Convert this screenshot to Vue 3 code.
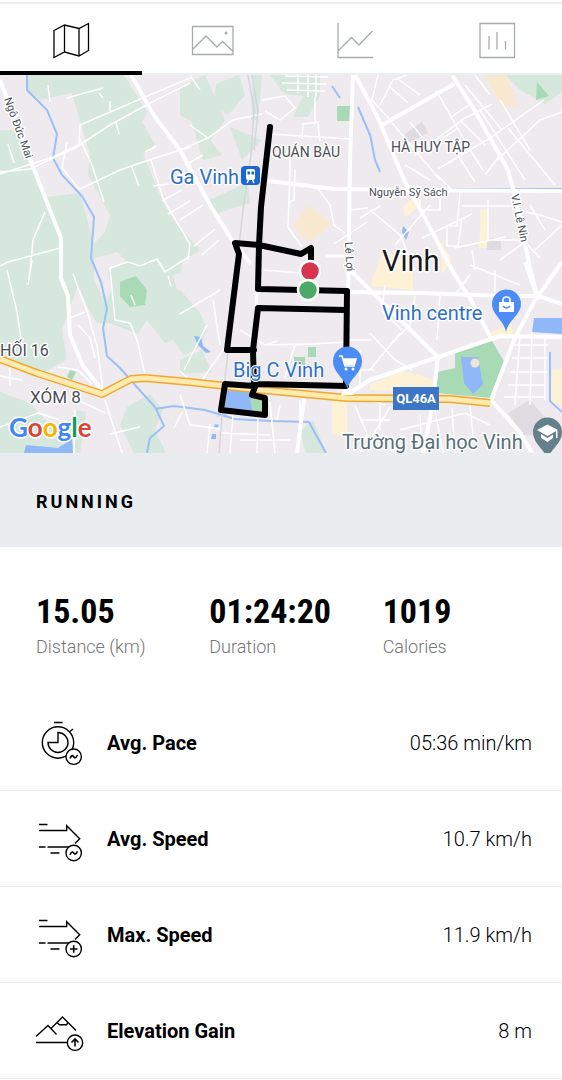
<script setup>
import { ref } from 'vue'

const tabs = [
  { id: 'map', label: 'Map' },
  { id: 'photos', label: 'Photos' },
  { id: 'graph', label: 'Graph' },
  { id: 'splits', label: 'Splits' }
]
const active = ref('map')

const totals = [
  { value: '15.05', label: 'Distance (km)' },
  { value: '01:24:20', label: 'Duration' },
  { value: '1019', label: 'Calories' }
]

const details = [
  { icon: 'pace', label: 'Avg. Pace', value: '05:36 min/km' },
  { icon: 'speed', label: 'Avg. Speed', value: '10.7 km/h' },
  { icon: 'max', label: 'Max. Speed', value: '11.9 km/h' },
  { icon: 'elevation', label: 'Elevation Gain', value: '8 m' }
]
</script>

<template>
  <main class="page">
    <nav class="tabs" aria-label="Activity views">
      <button
        v-for="tab in tabs"
        :key="tab.id"
        type="button"
        class="tab"
        :class="{ active: active === tab.id }"
        :aria-label="tab.label"
        @click="active = tab.id"
      >
        <svg v-if="tab.id === 'map'" class="tab-icon" viewBox="0 0 44 40">
          <path d="M5 10.500 15.500 5 30 8.500 39.500 3.500V30.500L30 36 15.500 32 5 37.500ZM15.500 5V32M30 8.500V36" />
        </svg>
        <svg v-else-if="tab.id === 'photos'" class="tab-icon" viewBox="0 0 44 40">
          <path d="M1.500 6.500H42V34.500H1.500ZM2 29 15 16 26 27 31.500 21.500 42 31.500" />
          <circle cx="35" cy="13" r="1.500" class="dot" />
        </svg>
        <svg v-else-if="tab.id === 'graph'" class="tab-icon" viewBox="0 0 44 40">
          <path d="M5 3V37.500H40M5 31 18.500 17.500 26 25 39.500 11" />
        </svg>
        <svg v-else class="tab-icon" viewBox="0 0 44 40">
          <path d="M5 3.500H39.500V37.500H5ZM14 16V29.500M22 12V29.500M30.500 21V29.500" />
        </svg>
      </button>
    </nav>

    <svg class="map" viewBox="0 75 562 378" role="img" aria-label="Route map">
      <rect x="0" y="75" width="562" height="378" fill="#eeeaee" />

      <g fill="#d6e7dd">
        <path d="M27 75H124L147 112 142 122 155 144 143 154 163 202 180 228 200 250 182 262 180 290 200 313 207 330 200 347 184 355 173 340 165 343 147 320 138 334 110 323 97 323 88 308 78 285 62 330 67 359 45 372 0 354V130H14L47 197 80 193 94 244 105 232 110 215 88 175 90 155 72 93 40 100 27 90Z" />
        <path d="M0 392 30 403 62 438 76 410 86 412 80 453H0Z" />
        <path d="M127 407 150 394 163 410 155 430 166 453H134L120 425Z" />
        <path d="M180 87 205 75 225 120 210 140 222 155 203 160 192 122 180 115Z" />
        <path d="M216 84 239 75 245 95 228 115 213 105Z" />
        <path d="M230 127 262 140 242 160ZM210 200 248 182 250 203 217 213Z" />
        <path d="M270 75H320V95L308 117H293L303 96 284 94Z" />
        <path d="M505 75H562V92L545 104 520 90Z" />
        <path d="M180 360 202 350 212 372 180 374ZM300 432 313 420 326 453H306Z" />
        <path d="M253 75h9l-4 45h-7zM225 400 228 415 215 418Z" />
      </g>

      <g fill="#eeeaee">
        <path d="M94 258 118 252 127 262 108 270 112 290 105 302 94 280ZM173 275 193 270V292L177 290Z" />
      </g>
      <g fill="#a8dab5">
        <path d="M120 282 136 276 147 290 145 305 130 307 120 296Z" />
        <path d="M337 106H350V121H337ZM537 82 549 96 536 100ZM308 347h8v10h-8zM294 357h11v8h-11zM70 370l6 2-4 8-5-3z" />
        <path d="M455 350 492 341 505 363 492 398 436 393 438 372 455 368Z" />
      </g>
      <path fill="#f8e8cf" d="M293 226 308 205 332 223 318 236 309 242ZM485 75H507L518 107 500 105Z" />
      <g fill="#fdf1d6">
        <path d="M480 210h8v38h-10l2-15zM403 206l14-11 4 10-16 12zM440 240l12 20-10 15zM383 250l30 15v25l-43-4zM489 333l22-10 3 13-20 4zM370 385l30-15 35 10v12l-65-2zM332 393h15v42h-15zM552 370h10v36l-12-4z" />
      </g>
      <path fill="#dfdbe0" d="M405 134 422 122 428 133 408 143ZM487 238h14v12h-14zM508 413 530 400 560 435H523Z" />
      <path fill="#90b8f9" d="M461 357 478 357 483 385 473 394 464 383ZM534 318H562V334L532 332ZM26 445 58 448 72 439 73 453H24ZM403 226l6 6-3 8-4-8zM194 336l7 1 2 9 8 6-5 1-8-8zM226 388l24 1 4 24-29-5zM215 424l4 1-2 4-3-2zM212 434h4v5h-5z" />
      <path fill="#a8dab5" d="M250 396 263 400V413L252 411Z" />
      <circle cx="475" cy="363" r="4.500" fill="#ede4dc" />

      <g class="water">
        <path d="M27 75V90L47 110 57 134 53 158 62 175 82 196 94 217 91 258 101 282 107 309 103 328 107 356 121 369 135 385 155 407 164 426 150 438 147 453" />
        <path d="M155 409 174 406 205 410 235 419 270 421 309 422 326 453" />
        <path d="M370 134 375 160 380 172M332 86 340 98M358 107 370 135" />
        <path d="M550 352V401L562 412M450 189H562" />
      </g>

      <g class="lanes">
        <path d="M0 172 30 169 75 148 110 125 150 103 190 83M190 78 145 97 80 125 79 145 53 157 0 174" />
        <path d="M79 137 92 165 104 202M67 142 62 168 80 190M80 189 120 170 143 162 190 147" />
        <path d="M67 98 103 88M48 85 50 102M110 101v10M8 144 14 163M116 122 119 134M131 165 139 186M99 93l4 5M145 152l12-6" />
        <path d="M45 212 33 240 30 272M0 266 8 262 60 248M7 270 17 312 22 345M32 260 28 285" />
        <path d="M110 268 128 262 140 266 157 259 165 272 190 256M110 268 115 320 130 323 137 340 145 374" />
        <path d="M73 274 88 314 97 346 103 390M70 318 85 312M78 325 90 338 95 358M58 367 78 370 92 384M0 376 22 380M10 368v18M78 400 105 413M105 400 122 453M0 427 38 413 70 423M75 410 74 453M110 434 140 427M168 276l3 10M131 295l4 10" />
        <path d="M180 150 208 138 233 120 262 114M208 138 190 125M190 75 200 90M262 100 285 96 295 108 280 120 265 111" />
        <path d="M285 76 328 77M282 83 327 84M287 90 325 91M298 75v18M308 75v22M316 75v22" />
        <path d="M315 97V125M270 134 350 139M302 139 303 124 318 122 320 142M290 151V175L288 227 302 247M295 170 294 200 288 203M316 186 330 205 334 225 345 233M334 244 367 222M368 208 350 210" />
        <path d="M151 160 164 201 190 244 188 260M153 186 170 184M162 201 182 190M168 214 190 201M180 220 203 205M194 246 215 229M202 255 219 240M185 165l18-10" />
        <path d="M264 270 300 273M240 330 265 345 277 341M265 345 310 344M347 342 295 345 285 377M180 314 220 290M213 300 220 345M207 325 184 370M190 381 180 371M200 383 225 347" />
        <path d="M180 395 190 425 222 429M182 412 174 428M207 453 210 424M233 415 230 453M258 418 257 453M270 402 275 453M280 405 277 420M300 400v20M240 440H290M220 433 270 435" />
        <path d="M378 75 372 100 392 122M380 105 393 80 407 75M390 87 408 103M398 79 420 95M392 123 415 150 440 180M415 155 465 118 492 104M438 169 490 138 544 100M410 122 423 138M405 165 430 180M465 85 502 130M475 75 490 95" />
        <path d="M436 90 470 150 483 170M480 110 525 180M508 128 555 185M497 160 540 120 562 112M460 120 485 145M455 151 475 182M437 175 452 190M485 175 500 155M500 100 530 150M450 118l20-14M440 140l18-12" />
        <path d="M370 210 400 235 415 270M395 245 430 205M420 200V210H440V194M460 192 457 226H447V246H458L462 218M422 238 472 214M462 206H512M488 200V240H518M472 250 475 270M455 248 505 237M512 209 540 215 562 222M500 260 525 242 540 258M530 205 545 230M535 250 562 225M360 218 380 206" />
        <path d="M370 333 395 360 412 370M385 285 382 310 402 330M415 296 410 325 390 345M440 296 437 340M455 295 470 275M470 265 520 285M495 270V293M370 370 400 333M400 430 465 413 490 425M390 407 370 440M385 405 370 400M420 415 422 453M435 410 443 453M452 408 455 453M470 405 473 435M520 335 515 405M532 332 530 405M545 337V400M514 345H548M512 358H547M510 372H547M508 385H545M504 397H545" />
        <path d="M355 405 367 434 360 453M380 405V430M360 420H390M350 352V380M360 350V385M350 370H375M350 340H372" />
      </g>

      <g class="rails">
        <path d="M248 75 254 110 251 155 243 210 233 300 225 380 219 453M252 75 258 112 254 150" />
      </g>

      <g class="roads">
        <path d="M0 80 31 162 61 238 61 278 68 296 70 335 83 366 102 390" class="wide" />
        <path d="M131 75 155 117 180 150 210 205 232 240 251 264" class="wide" />
        <path d="M353 75 350 160 349 238 347 384" class="wide" />
        <path d="M355 75 378 118 405 182 425 218 452 270 471 300 492 340" class="wide" />
        <path d="M268 181 335 189 400 190 562 191" class="wide" />
        <path d="M382 125 454 84M452 75 475 111 508 170 516 200 530 268 538 300" class="wide" />
        <path d="M260 290 345 292 420 293 505 296 538 296 562 304" class="wide" />
        <path d="M525 262 537 296 514 340 491 400 520 432 532 453M538 296 562 262" class="wide" />
        <path d="M350 393 370 380 438 357 500 336 562 337M438 357 432 408 423 453M350 270 375 295 438 357M304 399 297 453" class="wide" />
        <path d="M348 256 325 256M258 264 255 330 255 380" />
      </g>

      <path class="highway-edge" d="M0 359 37 373 102 394 131 379 145 378 190 382 252 389 347 398 450 399 490 403" />
      <path class="highway" d="M0 359 37 373 102 394 131 379 145 378 190 382 252 389 347 398 450 399 490 403" />
      <path fill="#fff" d="M341 395 347 384 354 395Z" />

      <circle cx="270" cy="127" r="3" fill="#777" />
      <path class="route" d="M270 127 261 207 259 245 258 289 347 291 346 386 256 384 252 395 265 398 265 415 221 410 225 384 254 386 253 350 258 308 346 310M254 350 227 350 239 254 235 243 259 245 301 254 311 248 311 265" />

      <g class="poi">
        <text x="170" y="184" font-size="20">Ga Vinh</text>
        <text x="233" y="377" font-size="20" class="poi-top">Big C Vinh</text>
        <text x="382" y="320" font-size="20">Vinh centre</text>
      </g>

      <g>
        <rect x="241" y="166" width="19" height="19" rx="4" fill="#1a67d2" />
        <rect x="246" y="169" width="9" height="11" rx="2" fill="#fff" />
        <path d="M247.500 171.500h2.500v3h-2.500zM251.500 171.500h2.500v3h-2.500z" fill="#1a67d2" />
        <path d="M247 183 249 179M254 183 252 179" stroke="#fff" stroke-width="1.500" />
      </g>

      <circle cx="310" cy="271" r="10" fill="#d8334f" stroke="#fff" stroke-width="2.500" />
      <circle cx="308" cy="290" r="10" fill="#4caa69" stroke="#fff" stroke-width="2.500" />

      <g>
        <path d="M347.500 389C345 378 333 373 333 361A14.500 14.500 0 0 1 362 361C362 373 350 378 347.500 389Z" fill="#4b8df5" />
        <path d="M339 356H342L345 366H354L356 359H343" class="pin-line" />
        <path d="M343 359H356L354 365H345Z" fill="#fff" />
        <circle cx="346" cy="369" r="1.500" fill="#fff" /><circle cx="353" cy="369" r="1.500" fill="#fff" />
      </g>
      <g>
        <path d="M506 332C504 320 492 315 492 304A14.500 14.500 0 0 1 521 304C521 315 508 320 506 332Z" fill="#4b8df5" />
        <path d="M499 302H514V312H499Z" fill="#fff" />
        <path d="M503 302V300Q503 297 506.500 297T510 300V302" class="pin-line" />
        <path d="M503 306Q506.500 310 510 306" fill="none" stroke="#4b8df5" stroke-width="1.500" />
      </g>
      <g>
        <path d="M547.500 460C545 449 533 444 533 432A14.500 14.500 0 0 1 562 432C562 444 550 449 547.500 460Z" fill="#64818b" />
        <path d="M537 430 547.500 424.500 558 430 547.500 436ZM541 434 547.500 438 553 434.500V438L547.500 442 541 438ZM556 431h1.500v7h-1.500z" fill="#fff" />
      </g>

      <rect x="393" y="387" width="46" height="23" fill="#3c76c5" />
      <text x="416" y="403" font-size="13" font-weight="700" text-anchor="middle" fill="#fff">QL46A</text>

      <g class="place">
        <text x="272" y="157" font-size="14">QUÁN BÀU</text>
        <text x="391" y="152" font-size="14">HÀ HUY TẬP</text>
        <text x="369" y="196" font-size="11">Nguyễn Sỹ Sách</text>
        <text x="0" y="356" font-size="16">HỐI 16</text>
        <text x="30" y="403" font-size="17">XÓM 8</text>
        <text font-size="11" transform="translate(4 99) rotate(70)">Ngô Đức Mai</text>
        <text font-size="11" transform="translate(345 242) rotate(87)">Lê Lợi</text>
        <text font-size="11" transform="translate(511 195) rotate(78)">V.I. Lê Nin</text>
      </g>
      <text x="382" y="271" font-size="29" class="city">Vinh</text>
      <text x="342" y="449" font-size="20" class="school">Trường Đại học Vinh</text>
      <text x="9" y="437" font-size="26" class="brand"><tspan fill="#4285f4">G</tspan><tspan fill="#db4437">o</tspan><tspan fill="#f4b400">o</tspan><tspan fill="#4285f4">g</tspan><tspan fill="#0f9d58">l</tspan><tspan fill="#db4437">e</tspan></text>
    </svg>

    <header class="activity">
      <h1>RUNNING</h1>
    </header>

    <dl class="totals">
      <div v-for="item in totals" :key="item.label" class="total">
        <dt>{{ item.label }}</dt>
        <dd>{{ item.value }}</dd>
      </div>
    </dl>

    <dl class="details">
      <div v-for="item in details" :key="item.label" class="detail">
        <dt>
          <svg class="detail-icon" viewBox="0 0 48 48" aria-hidden="true">
            <template v-if="item.icon === 'pace'">
              <circle cx="22" cy="23.500" r="15.700" />
              <path d="M22 13.500A10 10 0 1 1 12 23.500H22ZM18 3.500H26.500M34 12.500 37 10" />
              <circle cx="37.700" cy="37.700" r="7.700" class="badge" />
              <path d="M34 39.500Q36 35 37.700 37.700T41.500 36" class="mark" />
            </template>
            <template v-else-if="item.icon === 'elevation'">
              <path d="M0 35.500H31.500M0 29.500 12 18.500 20.500 27.500M15 21.500 26.500 10 40 23.500M21 15.500 23.500 17.700H30.500L32 15.500" />
              <circle cx="39" cy="35.700" r="7.700" class="badge" />
              <path d="M39 39.500V32.500M35.500 35.500 39 32 42.500 35.500" class="mark" />
            </template>
            <template v-else>
              <path d="M3 9.500H11.500M3 15.500H30.700V10.700L43.700 23.700 39 28.500M3 32H9.500M11.500 32H33M14.500 38H23.500" />
              <circle cx="37.700" cy="38" r="7.700" class="badge" />
              <path v-if="item.icon === 'speed'" d="M34 39.800Q36 35.300 37.700 38T41.500 36.300" class="mark" />
              <path v-else d="M34 38H41.500M37.700 34.200V41.800" class="mark" />
            </template>
          </svg>
          <span>{{ item.label }}</span>
        </dt>
        <dd>{{ item.value }}</dd>
      </div>
    </dl>
  </main>
</template>

<style>
body {
  background: #fff;
}
</style>

<style scoped>
.page {
  overflow: hidden;
  color: #000;
  background: #fff;
  font-family: Roboto, "Noto Sans", sans-serif;
}

.tabs {
  display: flex;
  margin-top: 2px;
  margin-right: -6px;
  border-top: 2px solid #e9eced;
}

.tab {
  flex: 1;
  display: flex;
  align-items: center;
  justify-content: center;
  height: 71px;
  padding: 2px 0 0;
  border: 0;
  border-bottom: 2px solid #e9eeef;
  background: none;
  color: #a6acad;
  cursor: pointer;
}

.tab.active {
  padding-top: 4px;
  border-bottom: 4px solid #000;
  color: #000;
}

.tab-icon {
  width: 44px;
  height: 40px;
  fill: none;
  stroke: currentColor;
  stroke-width: 1.3;
}

.dot {
  fill: currentColor;
  stroke: none;
}

.map {
  display: block;
  width: 100%;
  font-family: Roboto, "Noto Sans", sans-serif;
}

.water path {
  fill: none;
  stroke: #9bc0f8;
  stroke-width: 2;
}

.lanes path {
  fill: none;
  stroke: #fff;
  stroke-width: 1.5;
}

.rails path {
  fill: none;
  stroke: #d5d5de;
  stroke-width: 1.5;
}

.roads path {
  fill: none;
  stroke: #fff;
  stroke-width: 3;
  stroke-linejoin: round;
}

.roads .wide {
  stroke-width: 4;
}

.highway-edge,
.highway {
  fill: none;
  stroke: #eda92c;
  stroke-width: 8;
  stroke-linejoin: round;
}

.highway {
  stroke: #ffebb0;
  stroke-width: 5;
}

.route {
  fill: none;
  stroke: #000;
  stroke-width: 6;
  stroke-linecap: round;
  stroke-linejoin: round;
}

.pin-line {
  fill: none;
  stroke: #fff;
  stroke-width: 1.6;
}

.poi,
.place,
.city,
.school,
.brand {
  paint-order: stroke;
  stroke: #fff;
  stroke-width: 3;
  stroke-linejoin: round;
}

.poi {
  fill: #2d6fc6;
}

.poi-top {
  stroke-width: 2;
}

.place {
  fill: #4b4f55;
}

.city {
  fill: #16181b;
}

.school {
  fill: #566f79;
}

.brand {
  font-family: Lato, sans-serif;
  font-weight: 700;
}

.activity {
  padding: 38px 36px 34px;
  background: #eaedf0;
}

h1 {
  margin: 0;
  font-size: 18px;
  line-height: 22px;
  font-weight: 700;
  letter-spacing: 3px;
}

.totals {
  display: grid;
  grid-template-columns: repeat(3, 1fr);
  margin: 0;
  padding: 42px 6px 34px 36px;
}

.total {
  display: flex;
  flex-direction: column-reverse;
  justify-content: flex-end;
}

.total dt {
  color: #757575;
  font-size: 18px;
  line-height: 28px;
  font-weight: 300;
}

.total dd {
  margin: 0;
  font-family: "Liberation Sans Narrow", "Roboto Condensed", Roboto, sans-serif;
  font-size: 34px;
  line-height: 44px;
  font-weight: 700;
}

.details {
  margin: 0;
}

.detail {
  display: flex;
  align-items: center;
  justify-content: space-between;
  height: 96px;
  padding: 0 30px 0 36px;
  border-bottom: 1px solid #e8eaeb;
  box-sizing: border-box;
  font-size: 20px;
  line-height: 28px;
}

.detail dt {
  display: flex;
  align-items: center;
  gap: 23px;
  font-weight: 700;
}

.detail dd {
  margin: 0;
  font-weight: 300;
}

.detail-icon {
  width: 48px;
  height: 48px;
  fill: none;
  stroke: #000;
  stroke-width: 1.4;
}

.badge {
  fill: #fff;
}

.mark {
  stroke-width: 1.6;
}
</style>
